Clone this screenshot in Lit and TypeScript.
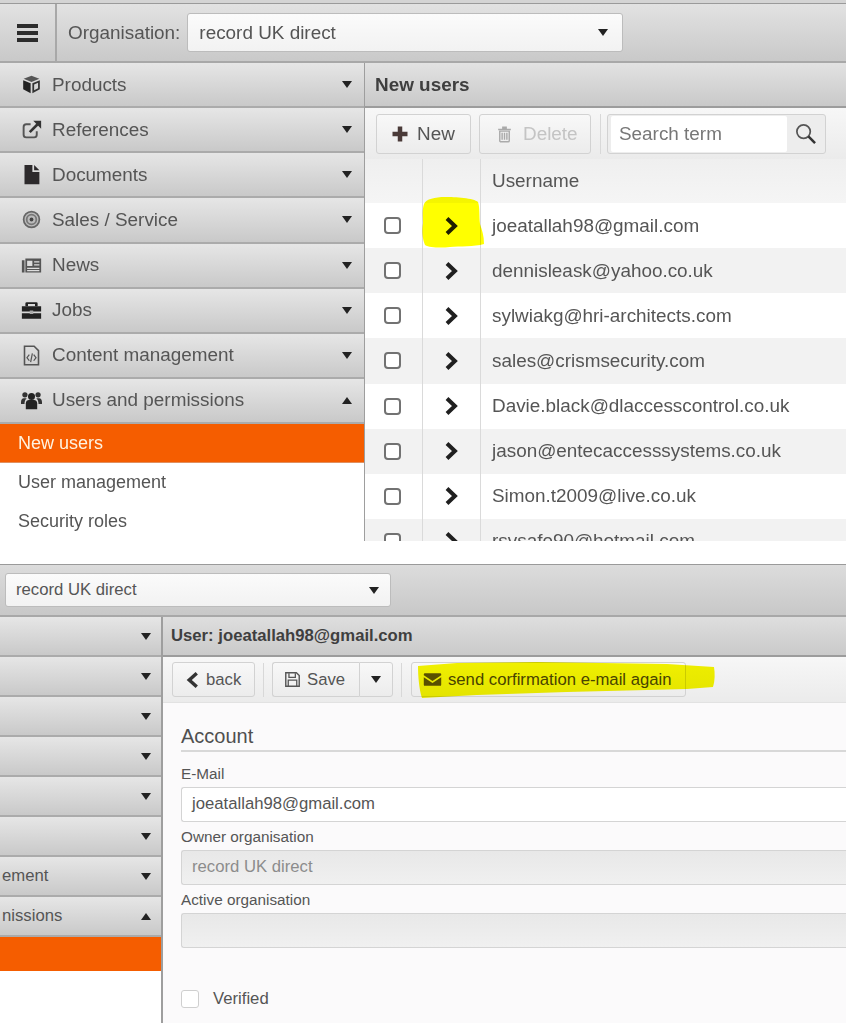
import { LitElement, html, css, svg } from "lit";
import { customElement } from "lit/decorators.js";

const ICONS: Record<string, any> = {
  cube: svg`<path d="M12 2 3 5.500 12 9l9-3.500z" fill="#555"/><path d="M2.500 7v10.500L11 22V10.500z" fill="#222"/><path d="M13 10.500V22l8.500-4.500V7zM15 12l4.500-1.900v6.200L15 18.700z" fill="#333"/>`,
  link: svg`<path d="M18 14v4a3 3 0 0 1-3 3H6a3 3 0 0 1-3-3V9a3 3 0 0 1 3-3h5" fill="none" stroke="#555" stroke-width="2.200"/><path d="M10 15 19 6" stroke="#333" stroke-width="3" fill="none"/><path d="M14 2h9v9z" fill="#333"/>`,
  file: svg`<path d="M4 1h9v8h8v14H4z" fill="#2d2a2c"/><path d="M15 1l6 6h-6z" fill="#2d2a2c"/>`,
  target: svg`<circle cx="12" cy="12" r="9" fill="#bbb" stroke="#666" stroke-width="2"/><circle cx="12" cy="12" r="5.500" fill="none" stroke="#777" stroke-width="2"/><circle cx="12" cy="12" r="2.200" fill="#444"/>`,
  news: svg`<path d="M1 6h3v14H1zM5 4h18v16H5z" fill="#555"/><path d="M7 6.500h6v6H7zM15 7h6v1.500h-6zM15 10.500h6V12h-6zM7 14.500h14V16H7zM7 17h14v1.500H7z" fill="#ddd"/>`,
  brief: svg`<path d="M8 6V3.500h8V6h3V3a1.500 1.500 0 0 0-1.500-1.500h-11A1.500 1.500 0 0 0 5 3v3z" fill="#222" transform="translate(0 1)"/><path d="M1 7h22v6H1zM1 15h22v6.500H1z" fill="#222"/><path d="M10 12h4v4h-4z" fill="#aaa"/>`,
  code: svg`<path d="M4 1.500h11l5 5v16H4z" fill="none" stroke="#555" stroke-width="1.800"/><path d="M9.500 11 6.800 14.500l2.700 3.500M14.500 11l2.700 3.500-2.700 3.500M13 9.500l-2 10" fill="none" stroke="#555" stroke-width="1.400"/>`,
  users: svg`<circle cx="12" cy="7.500" r="4" fill="#222"/><circle cx="4.500" cy="5.500" r="3" fill="#333"/><circle cx="19.500" cy="5.500" r="3" fill="#333"/><path d="M5.500 22V15c0-2.500 2-3.500 3.500-3.500h6c1.500 0 3.500 1 3.500 3.500v7z" fill="#222"/><path d="M0 14c0-3 1.500-4.500 3-4.500h3.500C5 11 4 13 4 16H0zM24 14c0-3-1.500-4.500-3-4.500h-3.500C19 11 20 13 20 16h4z" fill="#333"/>`,
  plus: svg`<path d="M9 2h6v7h7v6h-7v7H9v-7H2V9h7z" fill="#4a3a38"/>`,
  trash: svg`<path d="M4 6h16v2H4zM9 3h6v3H9z" fill="#aaa"/><path d="M6 9h12v12a1.500 1.500 0 0 1-1.500 1.500h-9A1.500 1.500 0 0 1 6 21zM9 11v9M12 11v9M15 11v9" fill="none" stroke="#aaa" stroke-width="1.800"/>`,
  search: svg`<circle cx="10" cy="10" r="7" fill="none" stroke="#555" stroke-width="1.800"/><path d="M15 15l7 7" stroke="#333" stroke-width="2.600" fill="none"/>`,
  next: svg`<path d="M6 3l9.500 9L6 21" fill="none" stroke="#1f1f1f" stroke-width="4.800"/>`,
  back: svg`<path d="M17 3l-10 9 10 9" fill="none" stroke="#333" stroke-width="4.600"/>`,
  save: svg`<path d="M2.500 2.500h15l4 4v15h-19z" fill="none" stroke="#555" stroke-width="2"/><path d="M7 3v6h9V3M6 21v-8h12v8" fill="none" stroke="#555" stroke-width="1.800"/>`,
  mail: svg`<path d="M1 5.500A1.500 1.500 0 0 1 2.500 4h19A1.500 1.500 0 0 1 23 5.500v1L12 14 1 6.500z" fill="#5c5200"/><path d="M1 9l11 7.500L23 9v9.500a1.500 1.500 0 0 1-1.500 1.500h-19A1.500 1.500 0 0 1 1 18.500z" fill="#5c5200"/>`,
};

const icon = (n: string, cls = "ic") =>
  html`<svg class=${cls} viewBox="0 0 24 24" aria-hidden="true">${ICONS[n]}</svg>`;

const NAV = [
  ["cube", "Products"],
  ["link", "References"],
  ["file", "Documents"],
  ["target", "Sales / Service"],
  ["news", "News"],
  ["brief", "Jobs"],
  ["code", "Content management"],
  ["users", "Users and permissions"],
];
const MAILS = [
  "joeatallah98@gmail.com",
  "dennisleask@yahoo.co.uk",
  "sylwiakg@hri-architects.com",
  "sales@crismsecurity.com",
  "Davie.black@dlaccesscontrol.co.uk",
  "jason@entecaccesssystems.co.uk",
  "Simon.t2009@live.co.uk",
  "rsvsafe90@hotmail.com",
];

@customElement("app-root")
export class AppRoot extends LitElement {
  static styles = css`
    :host {
      display: block;
      width: 846px;
      height: 1024px;
      overflow: hidden;
      background: #fff;
      font-family: "Liberation Sans", Arial, sans-serif;
      color: #555;
    }
    .page { filter: blur(0.5px); }
    .panel { position: relative; overflow: hidden; }
    .p1 { height: 541px; padding-top: 3px; box-sizing: border-box; background: #d4d4d4; font-size: 18.900px; }
    .p2 { height: 460px; margin-top: 23px; font-size: 16.700px; background: #fff; }

    .head { display: flex; align-items: center; border-top: 1px solid #9a9a9a; border-bottom: 2px solid #a8a8a8; box-sizing: border-box; background: linear-gradient(#e2e2e2, #c9c9c9); }
    .p1 .head { height: 60px; }
    .p2 .head { height: 53px; padding-left: 5px; background: linear-gradient(#dcdcdc, #c8c8c8); }
    .burger { width: 55px; height: 100%; display: flex; flex-direction: column; justify-content: center; align-items: center; gap: 3px; border-right: 2px solid #a8a8a8; flex: none; }
    .burger i { display: block; width: 21px; height: 4px; background: #2c2c2c; }
    .org { margin: 0 7px 0 11px; }
    .select { display: flex; align-items: center; justify-content: space-between; box-sizing: border-box; background: linear-gradient(#fbfbfb, #f2f2f2); border: 1px solid #bcbcbc; border-radius: 3px; }
    .p1 .select { width: 436px; height: 39px; padding: 0 14px 0 11px; }
    .p2 .select { width: 386px; height: 34px; padding: 0 11px 0 10px; }
    .caret { width: 0; height: 0; border-left: 5.500px solid transparent; border-right: 5.500px solid transparent; border-top: 7px solid #222; flex: none; }
    .caret.up { border-top: 0; border-bottom: 7px solid #222; }

    .body { display: flex; background: #fff; }
    .side { flex: none; box-sizing: border-box; background: #fff; }
    .p1 .side { width: 364px; }
    .p2 .side { width: 161px; }
    .item { display: flex; align-items: center; box-sizing: border-box; background: linear-gradient(#e6e6e6, #c9c9c9); border-bottom: 2px solid #ababab; }
    .p1 .item { height: 45.140px; padding: 0 12px 0 21px; }
    .p2 .item { height: 40px; padding: 0 10px 0 0; justify-content: flex-end; }
    .p2 .item span { flex: 1; white-space: nowrap; overflow: hidden; padding-left: 2px; }
    .ic { width: 21px; height: 21px; flex: none; }
    .item .ic { margin-right: 10px; }
    .item .label { flex: 1; }
    .active { background: #f55d00; color: #fff3e0; border: 0; display: flex; align-items: center; box-sizing: border-box; }
    .p1 .active { height: 39px; padding-left: 18px; border-bottom: 1px solid #e09060; font-size: 18px; }
    .p2 .active { height: 34px; }
    .sub { height: 39px; display: flex; align-items: center; padding-left: 18px; font-size: 18px; }

    .main { flex: 1; min-width: 0; border-left: 1px solid #9e9e9e; box-sizing: border-box; background: #fff; }
    .p2 .main { border-left-width: 2px; }
    .title { display: flex; align-items: center; font-weight: 700; color: #3f3f3f; background: linear-gradient(#e2e2e2, #c9c9c9); border-bottom: 2px solid #9c9c9c; box-sizing: border-box; padding-left: 10px; }
    .p1 .title { height: 45px; }
    .p2 .title { height: 40px; padding-left: 8px; background: linear-gradient(#dedede, #cacaca); }
    .tools { display: flex; align-items: center; background: linear-gradient(#f7f7f7, #ebebeb); box-sizing: border-box; }
    .p1 .tools { height: 51px; padding-left: 11px; }
    .p2 .tools { height: 46px; padding-left: 9px; border-bottom: 1px solid #e2e2e2; }
    .btn { display: flex; align-items: center; box-sizing: border-box; border: 1px solid #d2d2d2; border-radius: 3px; background: linear-gradient(#f8f8f8, #ececec); flex: none; }
    .p1 .btn { height: 40px; }
    .p2 .btn { height: 35px; }
    .new { width: 95px; padding-left: 14px; gap: 8px; }
    .new .ic { width: 18px; height: 18px; }
    .del { width: 112px; margin-left: 8px; padding-left: 15px; gap: 9px; color: #c4c4c4; }
    .del .ic { width: 19px; height: 19px; }
    .sep { width: 1px; background: #d8d8d8; flex: none; }
    .p1 .sep { height: 40px; margin: 0 6px 0 9px; }
    .p2 .sep { height: 34px; margin: 0 8px; }
    .p2 .sep.s2 { margin-right: 9px; }
    .search { width: 219px; padding: 0 0 0 3px; background: #ededed; justify-content: space-between; }
    .search .field { width: 176px; height: 36px; background: #fff; border-radius: 2px; display: flex; align-items: center; padding-left: 8px; box-sizing: border-box; color: #777; }
    .search .ic { width: 23px; height: 23px; margin-right: 8px; }

    .row { display: grid; grid-template-columns: 58px 58px 1fr; background: #fff; }
    .row.h { height: 44px; background: linear-gradient(#efefef, #f5f5f5); }
    .row.d { height: 45.140px; }
    .row.alt { background: #f2f2f2; }
    .cell { display: flex; align-items: center; justify-content: center; border-right: 1px solid #dadada; }
    .cell.first { padding-right: 3px; }
    .cell.txt { border: 0; justify-content: flex-start; padding-left: 11px; }
    .box { width: 17px; height: 17px; box-sizing: border-box; border: 2px solid #727272; border-radius: 4px; background: #fff; }
    .cell .ic { width: 20px; height: 20px; }

    .back { width: 83px; padding-left: 11px; gap: 4px; }
    .back .ic { width: 18px; height: 18px; }
    .split { display: flex; }
    .p2 .split .save { width: 87px; padding-left: 11px; gap: 6px; border-radius: 3px 0 0 3px; border-right: 0; }
    .save .ic { width: 17px; height: 17px; }
    .p2 .split .more { width: 34px; justify-content: center; border-radius: 0 3px 3px 0; }
    .send { width: 275px; padding-left: 11px; gap: 6px; color: #4a4500; }
    .send .ic { width: 19px; height: 19px; }

    .form { padding: 21px 0 0 18px; background: #fbfafb; height: 320px; box-sizing: border-box; }
    .h2 { font-size: 20px; line-height: 24px; padding-bottom: 2px; border-bottom: 2px solid #d8d8d8; color: #4f4f4f; }
    .lab { line-height: 19px; font-size: 15.300px; color: #555; margin: 5.500px 0 3.500px; }
    .lab.l1 { margin-top: 12px; }
    .inp { height: 35px; box-sizing: border-box; display: flex; align-items: center; padding-left: 10px; border: 1px solid #d4d4d4; border-right: 0; border-radius: 3px 0 0 3px; background: #fff; }
    .inp.dis { background: linear-gradient(#e8e8e8, #f0f0f0); color: #8c8c8c; }
    .check { display: flex; align-items: center; gap: 14px; margin-top: 41px; }
    .check .cb { width: 18px; height: 18px; box-sizing: border-box; border: 1px solid #cfcfcf; border-radius: 3px; background: #fff; }

    .mark { position: absolute; mix-blend-mode: multiply; pointer-events: none; }
    .m1 { left: 421px; top: 196px; width: 64px; height: 53px; }
    .m2 { left: 417px; top: 97px; width: 298px; height: 38px; }
  `;

  private navTop() {
    return NAV.map(
      ([i, t], n) => html`<div class="item">${icon(i)}<span class="label">${t}</span><i class="caret ${n === 7 ? "up" : ""}"></i></div>`
    );
  }

  private navBottom() {
    const cut = ["", "", "", "", "", "", "ement", "nissions"];
    return cut.map(
      (t, n) => html`<div class="item"><span>${t}</span><i class="caret ${n === 7 ? "up" : ""}"></i></div>`
    );
  }

  render() {
    return html`<div class="page">
      <section class="panel p1">
        <header class="head">
          <div class="burger"><i></i><i></i><i></i></div>
          <span class="org">Organisation:</span>
          <div class="select"><span>record UK direct</span><i class="caret"></i></div>
        </header>
        <div class="body">
          <nav class="side">
            ${this.navTop()}
            <div class="active">New users</div>
            <div class="sub">User management</div>
            <div class="sub">Security roles</div>
          </nav>
          <main class="main">
            <div class="title">New users</div>
            <div class="tools">
              <div class="btn new">${icon("plus")}<span>New</span></div>
              <div class="btn del">${icon("trash")}<span>Delete</span></div>
              <div class="sep"></div>
              <div class="btn search"><div class="field">Search term</div>${icon("search")}</div>
            </div>
            <div class="row h"><div class="cell"></div><div class="cell"></div><div class="cell txt">Username</div></div>
            ${MAILS.map(
              (m, i) => html`<div class="row d ${i % 2 ? "alt" : ""}">
                <div class="cell first"><span class="box"></span></div>
                <div class="cell">${icon("next")}</div>
                <div class="cell txt">${m}</div>
              </div>`
            )}
          </main>
        </div>
        <svg class="mark m1" viewBox="0 0 64 53"><path d="M3 8C5 3 14 1 24 1s29 1 33 5c2 6 1 14 2 22 2 6 4 12 4 20-10 3-24 2-34 3-8 1-20 1-25-2C1 42 1 34 2 27 2 20 1 14 3 8z" fill="#ffff00"/></svg>
      </section>

      <section class="panel p2">
        <header class="head"><div class="select"><span>record UK direct</span><i class="caret"></i></div></header>
        <div class="body">
          <nav class="side">
            ${this.navBottom()}
            <div class="active"></div>
          </nav>
          <main class="main">
            <div class="title">User: joeatallah98@gmail.com</div>
            <div class="tools">
              <div class="btn back">${icon("back")}<span>back</span></div>
              <div class="sep"></div>
              <div class="split">
                <div class="btn save">${icon("save")}<span>Save</span></div>
                <div class="btn more"><i class="caret"></i></div>
              </div>
              <div class="sep s2"></div>
              <div class="btn send">${icon("mail")}<span>send corfirmation e-mail again</span></div>
            </div>
            <div class="form">
              <div class="h2">Account</div>
              <div class="lab l1">E-Mail</div>
              <div class="inp">joeatallah98@gmail.com</div>
              <div class="lab">Owner organisation</div>
              <div class="inp dis">record UK direct</div>
              <div class="lab">Active organisation</div>
              <div class="inp dis"></div>
              <div class="check"><span class="cb"></span><span>Verified</span></div>
            </div>
          </main>
        </div>
        <svg class="mark m2" viewBox="0 0 298 38"><path d="M1 5 40 2 120 1 250 3 297 6C298 12 298 20 296 26L270 28 150 31 60 34 5 37C2 28 1 14 1 5z" fill="#f7f700"/></svg>
      </section>
    </div>`;
  }
}
